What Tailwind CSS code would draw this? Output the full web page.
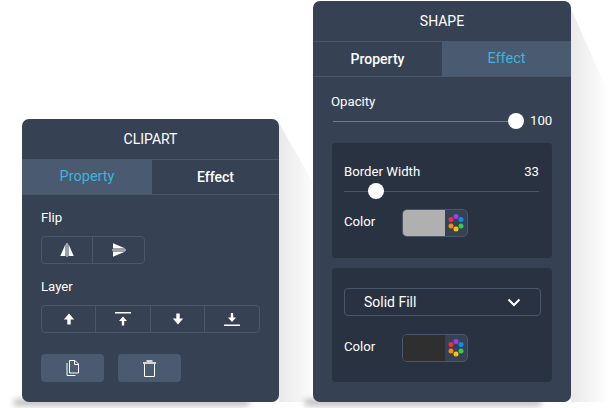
<!DOCTYPE html>
<html>
<head>
<meta charset="utf-8">
<script src="https://cdn.jsdelivr.net/npm/@tailwindcss/browser@4"></script>
</head>
<body class="bg-white">
<div class="w-[609px] h-[408px] overflow-hidden relative flex items-start pl-[22px] gap-[34px] font-['Roboto',sans-serif] text-[13.2px] font-normal text-white">

  <!-- CLIPART -->
  <section class="relative mt-[119px] w-[257px] h-[283px]">
    <div class="absolute left-[257px] top-[4px] w-[40px] h-[279px] bg-linear-to-r from-[#e9e9e9] to-white [clip-path:polygon(0_0,100%_70px,100%_100%,0_100%)]"></div>
    <div class="absolute left-[-8px] right-[30px] bottom-[-3px] h-[5px] bg-[#a5a5a5] blur-[3px]"></div>
    <div class="relative h-full rounded-[7px] bg-[#364154] flex flex-col overflow-hidden">
      <h2 class="h-[40px] flex items-center justify-center font-normal text-[14px]">CLIPART</h2>
      <div class="h-[36px] flex border-y border-[#4a5669] text-[14px] font-medium">
        <div class="w-[130px] bg-[#4a5a70] text-[#3fb4da] flex items-center justify-center font-normal text-[14.5px]">Property</div>
        <div class="flex-1 flex items-center justify-center">Effect</div>
      </div>
      <div class="pl-[19px] pr-[19px] pt-[14px] flex flex-col">
        <div class="h-[17px] leading-[17px]">Flip</div>
        <div class="mt-[10px] w-[104px] h-[28px] flex border border-[#4a5669] rounded-[4px]">
          <div class="w-[51px] border-r border-[#4a5669] flex items-center justify-center">
            <svg width="14" height="14" viewBox="0 0 14 14" fill="#fff"><path d="M6.500 0v14h1V0zM5.500 1 0.300 13h5.200zM8.500 1 13.700 13H8.500z"/></svg>
          </div>
          <div class="flex-1 flex items-center justify-center">
            <svg width="14" height="14" viewBox="0 0 14 14" fill="#fff"><path d="M0 6.500h14v1H0zM1 0.300 13.500 5.500H1zM1 8.500H13.500L1 13.700z"/></svg>
          </div>
        </div>
        <div class="mt-[14px] h-[17px] leading-[17px]">Layer</div>
        <div class="mt-[10px] w-[219px] h-[28px] flex border border-[#4a5669] rounded-[4px]">
          <div class="w-[54px] border-r border-[#4a5669] flex items-center justify-center">
            <svg width="12" height="12" viewBox="0 0 12 12" fill="#fff"><path d="M6 .5 .8 6.500h3.500V11.500h3.400V6.500h3.500z"/></svg>
          </div>
          <div class="w-[55px] border-r border-[#4a5669] flex items-center justify-center">
            <svg width="16" height="14" viewBox="0 0 16 14" fill="#fff"><path d="M0 0h16v1.500H0zM8 4.500 4 9h2.800V13.500h2.400V9h2.800z"/></svg>
          </div>
          <div class="w-[54px] border-r border-[#4a5669] flex items-center justify-center">
            <svg width="12" height="12" viewBox="0 0 12 12" fill="#fff"><path d="M6 11.500 .8 5.500h3.500V.5h3.400v5h3.500z"/></svg>
          </div>
          <div class="flex-1 flex items-center justify-center">
            <svg width="16" height="14" viewBox="0 0 16 14" fill="#fff"><path d="M0 12.500h16V14H0zM8 10 4 5.500h2.800V1h2.400v4.500h2.800z"/></svg>
          </div>
        </div>
        <div class="mt-[21px] flex gap-[14px]">
          <div class="w-[63px] h-[28px] rounded-[4px] bg-[#4a5a70] flex items-center justify-center">
            <svg width="13" height="16" viewBox="0 0 13 16" fill="none" stroke="#fff" stroke-width="1"><path d="M3.500.5h5.500l3.500 3.500v9h-9zM8.500.5v4h4M1 3v12.500h8.500"/></svg>
          </div>
          <div class="w-[63px] h-[28px] rounded-[4px] bg-[#4a5a70] flex items-center justify-center">
            <svg width="13" height="17" viewBox="0 0 13 17" fill="none" stroke="#fff" stroke-width="1"><path d="M1.500 4v12.500h10V4"/><path d="M0 3h13" stroke-width="1.500"/><path d="M3.500 1h6" stroke-width="1.500"/></svg>
          </div>
        </div>
      </div>
    </div>
  </section>

  <!-- SHAPE -->
  <section class="relative mt-[1px] w-[258px] h-[401px]">
    <div class="absolute left-[258px] top-[8px] w-[38px] h-[393px] bg-linear-to-r from-[#e9e9e9] to-white [clip-path:polygon(0_0,100%_85px,100%_100%,0_100%)]"></div>
    <div class="absolute left-[-8px] right-[30px] bottom-[-3px] h-[5px] bg-[#a5a5a5] blur-[3px]"></div>
    <div class="relative h-full rounded-[7px] bg-[#364154] flex flex-col overflow-hidden">
      <h2 class="h-[40px] flex items-center justify-center font-normal text-[14px]">SHAPE</h2>
      <div class="h-[36px] flex border-y border-[#4a5669] text-[14px] font-medium">
        <div class="w-[129px] flex items-center justify-center">Property</div>
        <div class="flex-1 bg-[#4a5a70] text-[#3fb4da] flex items-center justify-center font-normal text-[14.5px]">Effect</div>
      </div>
      <div class="px-[19px] pt-[16px] flex flex-col">
        <div class="h-[17px] leading-[17px] -ml-[1px]">Opacity</div>
        <div class="mt-[1px] h-[20px] flex items-center pl-[1px]">
          <div class="relative shrink-0 w-[183px] h-[1px] bg-[#6c7c8f]">
            <div class="absolute right-[-8px] top-[-8px] w-[16px] h-[16px] rounded-full bg-white"></div>
          </div>
          <span class="ml-[14px] whitespace-nowrap">100</span>
        </div>
        <div class="mt-[12px] h-[115px] rounded-[4px] bg-[#293241] px-[12px] pt-[20px] flex flex-col">
          <div class="flex justify-between h-[17px] leading-[17px] pr-[1px]"><span>Border Width</span><span>33</span></div>
          <div class="mt-[11px] relative w-[195px] h-[1px] bg-[#4a5669]">
            <div class="absolute left-[24px] top-[-8px] w-[16px] h-[16px] rounded-full bg-white"></div>
          </div>
          <div class="mt-[17px] flex items-center h-[28px]">
            <span class="w-[58px] pb-[2px]">Color</span>
            <div class="w-[66px] h-[28px] flex rounded-[5px] border border-[#4a5669] overflow-hidden bg-[#364154]">
              <div class="w-[42px] bg-[#b0b0b0]"></div>
              <svg class="m-auto" width="16" height="18" viewBox="0 0 16 18"><circle cx="8" cy="2.500" r="2.500" fill="#9b3ff0"/><circle cx="13" cy="5.500" r="2.500" fill="#0a8ef0"/><circle cx="13" cy="12" r="2.500" fill="#28cf5a"/><circle cx="8" cy="15" r="2.500" fill="#fcc400"/><circle cx="3" cy="12" r="2.500" fill="#fb8a10"/><circle cx="3" cy="5.500" r="2.500" fill="#ea3040"/></svg>
            </div>
          </div>
        </div>
        <div class="mt-[10px] h-[114px] rounded-[4px] bg-[#293241] px-[12px] pt-[20px] flex flex-col">
          <div class="w-[197px] h-[28px] flex items-center justify-between rounded-[4px] border border-[#4a5669] pl-[19px] pr-[19px] text-[14px]">
            <span>Solid Fill</span>
            <svg width="14" height="9" viewBox="0 0 14 9" fill="none" stroke="#fff" stroke-width="2"><path d="M1.500 1.500 7 7l5.500-5.500"/></svg>
          </div>
          <div class="mt-[18px] flex items-center h-[28px]">
            <span class="w-[58px] pb-[2px]">Color</span>
            <div class="w-[66px] h-[28px] flex rounded-[5px] border border-[#4a5669] overflow-hidden bg-[#364154]">
              <div class="w-[42px] bg-[#2f2f2f]"></div>
              <svg class="m-auto" width="16" height="18" viewBox="0 0 16 18"><circle cx="8" cy="2.500" r="2.500" fill="#9b3ff0"/><circle cx="13" cy="5.500" r="2.500" fill="#0a8ef0"/><circle cx="13" cy="12" r="2.500" fill="#28cf5a"/><circle cx="8" cy="15" r="2.500" fill="#fcc400"/><circle cx="3" cy="12" r="2.500" fill="#fb8a10"/><circle cx="3" cy="5.500" r="2.500" fill="#ea3040"/></svg>
            </div>
          </div>
        </div>
      </div>
    </div>
  </section>
</div>
</body>
</html>
